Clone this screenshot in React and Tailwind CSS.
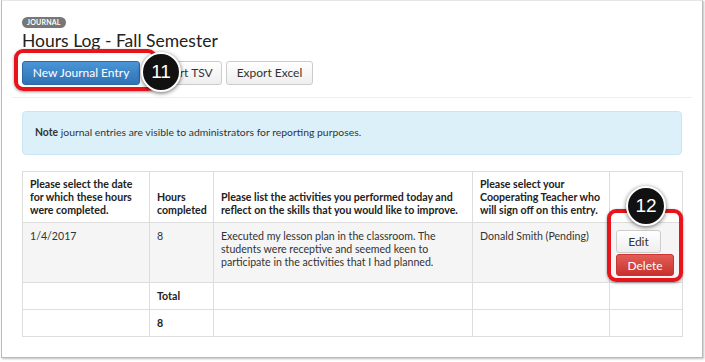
import React from 'react';

const headers = [
  'Please select the date for which these hours were completed.',
  'Hours completed',
  'Please list the activities you performed today and reflect on the skills that you would like to improve.',
  'Please select your Cooperating Teacher who will sign off on this entry.',
  '',
];

const Marker = ({ n, className }) => (
  <div
    className={`absolute w-[40px] h-[40px] rounded-full bg-[#111] border-[2.5px] border-white shadow-[0_1px_4px_rgba(0,0,0,0.6)] flex items-center justify-center text-white text-[19px] font-['Liberation_Sans',sans-serif] ${className}`}
  >
    {n}
  </div>
);

export default function App() {
  return (
    <div className="relative w-[705px] h-[362px] bg-white overflow-hidden font-['Lato',sans-serif] text-[#333]">
      {/* Panel */}
      <div className="ml-[1px] w-[702px] h-[358px] border-x border-b border-t border-t-[#e6e6e6] border-[#b9b9b9] shadow-[1px_1px_2px_rgba(0,0,0,0.25)] px-[20px] pt-[16px]">
        <div className="flex">
          <span className="h-[11px] px-[5px] rounded-full bg-[#777] text-white text-[7px] font-bold leading-[11px] tracking-[0.2px]">
            JOURNAL
          </span>
        </div>
        <h1 className="mt-[2px] text-[17.5px] leading-[22px] text-[#222]">Hours Log - Fall Semester</h1>

        <div className="mt-[9px] flex gap-[4px]">
          <button className="h-[24px] w-[118px] rounded-[3px] border border-[#2c6aa6] bg-gradient-to-b from-[#4b95d6] to-[#2f73b5] text-white text-[12px] leading-none">
            New Journal Entry
          </button>
          <button className="h-[24px] w-[78px] rounded-[3px] border border-[#ccc] bg-gradient-to-b from-white to-[#eee] text-[#333] text-[12px] leading-none">
            Export TSV
          </button>
          <button className="h-[24px] w-[87px] rounded-[3px] border border-[#ccc] bg-gradient-to-b from-white to-[#eee] text-[#333] text-[12px] leading-none">
            Export Excel
          </button>
        </div>

        <div className="-mx-[10px] mt-[12px] h-px bg-[#eee]" />

        <div className="mt-[13px] h-[44px] rounded-[4px] border border-[#c9e6f4] bg-[#dcf0fa] px-[12px] flex items-center text-[10.4px] text-[#333]">
          <span>
            <b>Note</b> journal entries are visible to administrators for reporting purposes.
          </span>
        </div>

        <table className="mt-[16px] w-[660px] table-fixed border-collapse text-[10.6px] leading-[13px]">
          <colgroup>
            <col className="w-[127px]" />
            <col className="w-[64px]" />
            <col className="w-[259px]" />
            <col className="w-[137px]" />
            <col className="w-[73px]" />
          </colgroup>
          <thead>
            <tr>
              {headers.map((h, i) => (
                <th
                  key={i}
                  className="border border-[#ddd] px-[7px] py-[5px] text-left align-bottom font-bold text-[#222] h-[51px]"
                >
                  {h}
                </th>
              ))}
            </tr>
          </thead>
          <tbody>
            <tr className="bg-[#f5f5f5]">
              <td className="border border-[#ddd] px-[7px] py-[7px] align-top">1/4/2017</td>
              <td className="border border-[#ddd] px-[7px] py-[7px] align-top">8</td>
              <td className="border border-[#ddd] px-[7px] py-[7px] align-top">
                Executed my lesson plan in the classroom. The students were receptive and seemed keen to participate in
                the activities that I had planned.
              </td>
              <td className="border border-[#ddd] px-[7px] py-[7px] align-top">Donald Smith (Pending)</td>
              <td className="border border-[#ddd] pl-[6px] pr-[6px] pt-[7px] pb-[6px] align-top">
                <div className="flex flex-col items-start gap-[1px]">
                  <button className="h-[23px] w-[45px] rounded-[3px] border border-[#ccc] bg-gradient-to-b from-white to-[#eee] text-[12px] text-[#333]">
                    Edit
                  </button>
                  <button className="h-[22px] w-[58px] rounded-[3px] border border-[#c33] bg-gradient-to-b from-[#e25c58] to-[#c9302c] text-[12px] text-white">
                    Delete
                  </button>
                </div>
              </td>
            </tr>
            <tr>
              <td className="border border-[#ddd] px-[7px] h-[27px]" />
              <td className="border border-[#ddd] px-[7px] font-bold text-[#222]">Total</td>
              <td className="border border-[#ddd]" />
              <td className="border border-[#ddd]" />
              <td className="border border-[#ddd]" />
            </tr>
            <tr>
              <td className="border border-[#ddd] px-[7px] h-[27px]" />
              <td className="border border-[#ddd] px-[7px] font-bold text-[#222]">8</td>
              <td className="border border-[#ddd]" />
              <td className="border border-[#ddd]" />
              <td className="border border-[#ddd]" />
            </tr>
          </tbody>
        </table>
      </div>

      {/* Annotations */}
      <div className="absolute left-[14px] top-[49px] w-[143px] h-[42px] rounded-[9px] border-[4px] border-[#e8141c] shadow-[0_1px_3px_rgba(0,0,0,0.4)]" />
      <Marker n="11" className="left-[141px] top-[52px]" />
      <div className="absolute left-[607px] top-[209px] w-[76px] h-[73px] rounded-[9px] border-[4px] border-[#e8141c] shadow-[0_1px_3px_rgba(0,0,0,0.4)]" />
      <Marker n="12" className="left-[626px] top-[186px]" />
    </div>
  );
}
